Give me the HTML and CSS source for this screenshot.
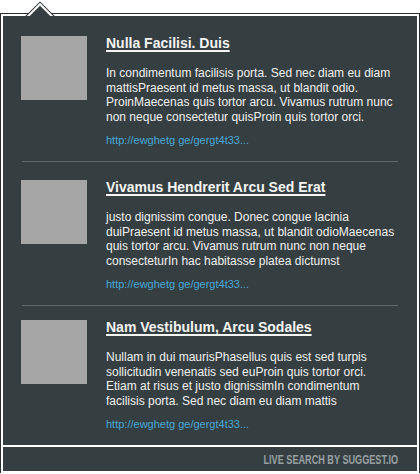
FILE: index.html
```html
<!DOCTYPE html>
<html>
<head>
<meta charset="utf-8">
<link rel="stylesheet" href="styles.css">
</head>
<body>
<div class="panel">
  <div class="arrow"><div class="arrow-sq"></div></div>
  <div class="list">
    <div class="item">
      <div class="thumb"></div>
      <div class="text">
        <a class="title">Nulla Facilisi. Duis</a>
        <p class="desc">In condimentum facilisis porta. Sed nec diam eu diam mattisPraesent id metus massa, ut blandit odio. ProinMaecenas quis tortor arcu. Vivamus rutrum nunc non neque consectetur quisProin quis tortor orci.</p>
        <a class="link">http://ewghetg ge/gergt4t33...</a>
      </div>
    </div>
    <div class="item">
      <div class="thumb"></div>
      <div class="text">
        <a class="title">Vivamus Hendrerit Arcu Sed Erat</a>
        <p class="desc">justo dignissim congue. Donec congue lacinia duiPraesent id metus massa, ut blandit odioMaecenas quis tortor arcu. Vivamus rutrum nunc non neque consecteturIn hac habitasse platea dictumst</p>
        <a class="link">http://ewghetg ge/gergt4t33...</a>
      </div>
    </div>
    <div class="item">
      <div class="thumb"></div>
      <div class="text">
        <a class="title">Nam Vestibulum, Arcu Sodales</a>
        <p class="desc">Nullam in dui maurisPhasellus quis est sed turpis sollicitudin venenatis sed euProin quis tortor orci. Etiam at risus et justo dignissimIn condimentum facilisis porta. Sed nec diam eu diam mattis</p>
        <a class="link">http://ewghetg ge/gergt4t33...</a>
      </div>
    </div>
  </div>
  <div class="footer"><span class="footer-text">LIVE SEARCH BY SUGGEST.IO</span></div>
</div>
</body>
</html>
```

FILE: styles.css
```css
html, body {
  margin: 0;
  padding: 0;
  background: #ffffff;
}

body {
  font-family: "Liberation Sans", Arial, sans-serif;
}

.panel {
  position: relative;
  box-sizing: border-box;
  width: 418px;
  height: 459px;
  margin: 14px 1px 0 1px;
  background: #353f41;
  border: 2px solid #ffffff;
  box-shadow: 0 0 0 1px #283032;
  display: flex;
  flex-direction: column;
}

.arrow {
  position: absolute;
  left: 19px;
  top: -16px;
  width: 36px;
  height: 16px;
  overflow: hidden;
}

.arrow-sq {
  position: absolute;
  box-sizing: border-box;
  left: 8px;
  top: 6.5px;
  width: 20px;
  height: 20px;
  background: #353f41;
  border: 2px solid #ffffff;
  box-shadow: 0 0 0 1px #283032;
  transform: rotate(45deg);
}

.list {
  flex: 1;
  display: flex;
  flex-direction: column;
}

.item {
  display: flex;
  margin: 0 19px;
  padding: 18px 0 14px 0;
}

.item:first-child {
  padding-top: 20px;
}

.item + .item {
  border-top: 1px solid #5b6868;
}

.item:last-child {
  padding-top: 14px;
  padding-bottom: 12px;
}

.thumb {
  flex: none;
  width: 66px;
  height: 64px;
  margin-left: -1px;
  background: #a6a6a6;
}

.text {
  flex: 1;
  margin-left: 19px;
  min-width: 0;
}

.title {
  display: block;
  font-size: 14px;
  font-weight: bold;
  line-height: 14px;
  color: #f4f4f4;
  text-decoration: underline;
  text-decoration-thickness: 2px;
  text-underline-offset: 2px;
  margin-bottom: 16px;
}

.desc {
  margin: 0 0 10px 0;
  font-size: 12px;
  line-height: 14.5px;
  color: #f0f0f0;
}

.link {
  display: block;
  font-size: 11px;
  line-height: 13px;
  color: #47a8d6;
  text-decoration: none;
}

.footer {
  flex: none;
  height: 26px;
  box-sizing: border-box;
  border-top: 2px solid #ffffff;
  padding: 1px 19px 0 0;
  text-align: right;
  font-family: "Liberation Sans", Arial, sans-serif;
  font-weight: bold;
  font-size: 12px;
  line-height: 24px;
  color: #98a1a3;
  white-space: nowrap;
}

.footer-text {
  display: inline-block;
  transform: scaleX(0.76);
  transform-origin: right center;
}
```
